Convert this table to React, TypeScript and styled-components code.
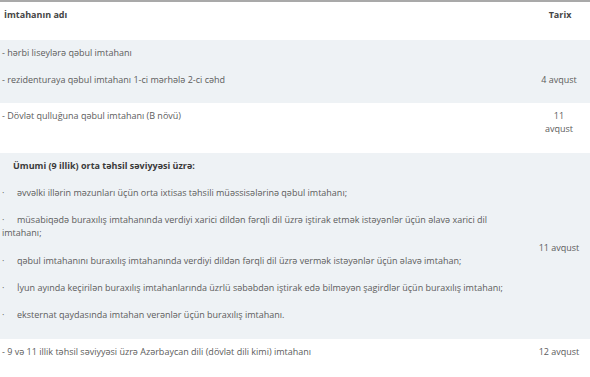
import React from "react";
import styled, {createGlobalStyle} from "styled-components";

const GlobalStyle = createGlobalStyle`
  html, body {
    margin: 0;
    padding: 0;
    background: #fff;
  }
  body {
    font-family: "Open Sans", "Liberation Sans", sans-serif;
  }
`;

const Table = styled.table`
  width: 590px;
  table-layout: fixed;
  border-collapse: collapse;
  border-top: 2px solid #a9a9a9;
  font-size: 9px;
  line-height: 13px;
  color: #5c5c5c;
`;

const Row = styled.tr<{$shaded?: boolean}>`
  background: ${({$shaded}) => ($shaded ? "#eef2f5" : "#fff")};
`;

const HeadCell = styled.th<{$date?: boolean}>`
  padding: 6px 2px 18.5px 4px;
  text-align: ${({$date}) => ($date ? "center" : "left")};
  font-weight: 700;
  color: #454545;
`;

const Cell = styled.td<{$date?: boolean; $valign?: "top" | "middle" | "bottom"}>`
  padding: 6px 2px 3.5px;
  vertical-align: ${({$valign}) => $valign || "top"};
  text-align: ${({$date}) => ($date ? "center" : "left")};
`;

const Para = styled.p<{$indent?: number}>`
  margin: 0 0 14.2px;
  padding-left: ${({$indent}) => $indent || 0}px;
`;

const Heading = styled.strong`
  font-weight: 700;
  color: #3a3a3a;
`;

const Bullet = styled.span`
  display: inline-block;
  width: 15px;
`;

const App = () => (
    <>
        <GlobalStyle/>
        <Table>
            <colgroup>
                <col/>
                <col style={{width: 62}}/>
            </colgroup>
            <thead>
            <Row>
                <HeadCell>İmtahanın adı</HeadCell>
                <HeadCell $date>Tarix</HeadCell>
            </Row>
            </thead>
            <tbody>
            <Row $shaded>
                <Cell>
                    <Para>- hərbi liseylərə qəbul imtahanı</Para>
                    <Para>- rezidenturaya qəbul imtahanı 1-ci mərhələ 2-ci cəhd</Para>
                </Cell>
                <Cell $date $valign="bottom">
                    <Para>4 avqust</Para>
                </Cell>
            </Row>
            <Row>
                <Cell>
                    <Para>- Dövlət qulluğuna qəbul imtahanı (B növü)</Para>
                </Cell>
                <Cell $date>
                    <Para>11<br/>avqust</Para>
                </Cell>
            </Row>
            <Row $shaded>
                <Cell>
                    <Para $indent={11}><Heading>Ümumi (9 illik) orta təhsil səviyyəsi üzrə:</Heading></Para>
                    <Para><Bullet>·</Bullet>əvvəlki illərin məzunları üçün orta ixtisas təhsili müəssisələrinə qəbul imtahanı;</Para>
                    <Para><Bullet>·</Bullet>müsabiqədə buraxılış imtahanında verdiyi xarici dildən fərqli dil üzrə iştirak etmək istəyənlər üçün əlavə xarici dil imtahanı;</Para>
                    <Para><Bullet>·</Bullet>qəbul imtahanını buraxılış imtahanında verdiyi dildən fərqli dil üzrə vermək istəyənlər üçün əlavə imtahan;</Para>
                    <Para><Bullet>·</Bullet>İyun ayında keçirilən buraxılış imtahanlarında üzrlü səbəbdən iştirak edə bilməyən şagirdlər üçün buraxılış imtahanı;</Para>
                    <Para><Bullet>·</Bullet>eksternat qaydasında imtahan verənlər üçün buraxılış imtahanı.</Para>
                </Cell>
                <Cell $date $valign="middle">11 avqust</Cell>
            </Row>
            <Row>
                <Cell>
                    <Para>- 9 və 11 illik təhsil səviyyəsi üzrə Azərbaycan dili (dövlət dili kimi) imtahanı</Para>
                </Cell>
                <Cell $date>
                    <Para>12 avqust</Para>
                </Cell>
            </Row>
            </tbody>
        </Table>
    </>
);

export default App;
